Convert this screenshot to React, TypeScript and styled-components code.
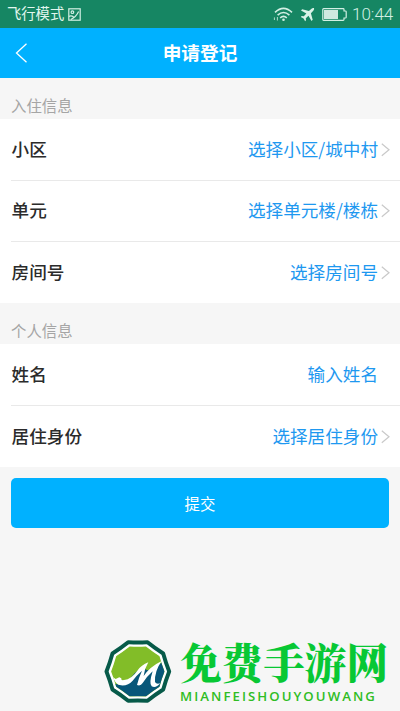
import React from "react";
import styled, { createGlobalStyle } from "styled-components";

const GlobalStyle = createGlobalStyle`
  * { box-sizing: border-box; }
  body {
    margin: 0;
    background: #f6f6f6;
    font-family: "Noto Sans CJK SC", sans-serif;
  }
`;

const Screen = styled.div`
  width: 400px;
  height: 711px;
  display: flex;
  flex-direction: column;
  overflow: hidden;
  background: #f6f6f6;
`;

const StatusBar = styled.div`
  height: 28px;
  flex: none;
  display: flex;
  align-items: center;
  justify-content: space-between;
  padding: 0 7px 0 7px;
  background: #168663;
  color: #d3efe4;
`;

const StatusGroup = styled.div`
  display: flex;
  align-items: center;
`;

const Mode = styled.span`
  font-size: 14.3px;
  line-height: 26px;
  height: 28px;
  margin-right: 4px;
  color: #e2f6ee;
`;

const Clock = styled.span`
  font-family: Roboto, sans-serif;
  font-weight: 300;
  font-size: 17px;
  line-height: 28px;
  width: 41px;
  white-space: nowrap;
`;

const NavBar = styled.header`
  height: 50px;
  flex: none;
  display: grid;
  grid-template-columns: 60px 1fr 60px;
  align-items: center;
  background: #00b1ff;
  color: #fff;
`;

const BackButton = styled.button`
  border: 0;
  background: none;
  padding: 0 0 0 15px;
  height: 50px;
  display: flex;
  align-items: center;
`;

const Title = styled.h1`
  margin: 0;
  font-size: 18.7px;
  font-weight: 700;
  line-height: 48px;
  height: 50px;
  text-align: center;
`;

const SectionLabel = styled.h2<{ $height: number }>`
  margin: 0;
  flex: none;
  height: ${(p) => p.$height}px;
  display: flex;
  align-items: flex-end;
  padding: 0 12px 3px 11px;
  font-size: 15.4px;
  font-weight: 400;
  line-height: 22px;
  color: #a5a5a5;
`;

const Group = styled.section`
  flex: none;
  background: #fff;
`;

const Row = styled.div<{ $height: number }>`
  height: ${(p) => p.$height}px;
  display: flex;
  align-items: center;
  margin-left: 11px;
  padding-right: 10px;
  font-size: 17.6px;
  line-height: 26px;

  & + & {
    border-top: 1px solid #e9e9e9;
  }
`;

const Label = styled.span`
  flex: 1;
  padding: 0 0 2px 0.6px;
  font-weight: 500;
  color: #2b2b2b;
`;

const Value = styled.span`
  padding-bottom: 2px;
  color: #1e98f0;
`;

const Trailing = styled.span`
  width: 12px;
  display: flex;
  justify-content: flex-end;
`;

const Submit = styled.button`
  flex: none;
  height: 50px;
  margin: 11px 11px 0;
  padding: 0;
  border: 0;
  border-radius: 5px;
  background: #00b1ff;
  color: #fff;
  font: 400 15.4px/48px "Noto Sans CJK SC", sans-serif;
`;

const Brand = styled.footer`
  margin-top: auto;
  flex: none;
  height: 75px;
  display: flex;
  padding-left: 103px;
`;

const BrandText = styled.div`
  margin-left: 7px;
  display: flex;
  flex-direction: column;
`;

const BrandName = styled.span`
  height: 52px;
  font-family: "Noto Serif CJK SC", "Noto Sans CJK SC", serif;
  font-size: 41.6px;
  font-weight: 900;
  line-height: 50px;
  white-space: nowrap;
  color: #08c834;
`;

const BrandLatin = styled.span`
  font-family: "Open Sans", sans-serif;
  font-size: 13.2px;
  font-weight: 600;
  line-height: 16px;
  letter-spacing: 2.05px;
  color: #2fbd24;
`;

const Chevron = () => (
  <svg width="9" height="14" viewBox="0 0 9 14" fill="none" stroke="#c9c9c9" strokeWidth="1.2">
    <path d="M0.8 0.8 L8 6.8 L0.8 12.8" />
  </svg>
);

const PictureIcon = () => (
  <svg width="13" height="13" viewBox="0 0 13 13" fill="none" stroke="#d3efe4" strokeWidth="1.2">
    <rect x="0.8" y="0.8" width="11.4" height="11.4" />
    <circle cx="4.4" cy="4.2" r="1.3" />
    <path d="M1 8.4 Q3.2 7 5.6 9 M2.8 11.6 Q8.2 9 10.6 3.6" />
  </svg>
);

const WifiIcon = () => (
  <svg width="20" height="15" viewBox="0 0 20 15" fill="none" stroke="#d3efe4" strokeWidth="1.6">
    <path d="M2 5.4 Q10.5 -2.6 19 5.4 M4.6 8.2 Q10.5 2.8 16.4 8.2 M7.2 10.8 Q10.5 8 13.8 10.8" />
    <circle cx="10.5" cy="12.8" r="1.3" fill="#d3efe4" stroke="none" />
    <path d="M1.4 10.4 V13 M4.4 10 V13.5" strokeWidth="1" opacity="0.8" />
  </svg>
);

const PlaneIcon = () => (
  <svg width="15" height="15" viewBox="0 0 15 15" fill="#d9f2e8">
    <path d="M14 1.1 Q12.7 0.5 11.5 1.7 L8.9 4.1 L2.2 2.3 L1 3.5 L6.4 6.6 L3.8 9.3 L1.7 9 L0.8 9.9 L3.6 11.4 L5.1 14.2 L6 13.3 L5.8 11.3 L8.5 8.7 L11.5 14 L12.7 12.8 L10.9 6.2 L13.3 3.7 Q14.6 2.3 14 1.1 Z" />
  </svg>
);

const BatteryIcon = () => (
  <svg width="25" height="13" viewBox="0 0 25 13">
    <path
      d="M1.6 0.7 H21.2 Q22 0.7 22 1.5 V3 H23.4 Q24.2 3 24.2 3.8 V9.2 Q24.2 10 23.4 10 H22 V11.5 Q22 12.3 21.2 12.3 H1.6 Q0.8 12.3 0.8 11.5 V1.5 Q0.8 0.7 1.6 0.7 Z"
      fill="none"
      stroke="#d3efe4"
      strokeWidth="1.2"
    />
    <rect x="2" y="2" width="14" height="9" fill="#cfe9e0" />
  </svg>
);

// Ten-sided badge outline whose sides bow slightly inwards.
const badge = (r: number) => {
  const cx = 104.5;
  const cy = 106.5;
  const at = (deg: number, radius: number) => {
    const a = (deg * Math.PI) / 180;
    return `${(cx + radius * Math.cos(a)).toFixed(2)} ${(cy + radius * 0.98 * Math.sin(a)).toFixed(2)}`;
  };
  let d = `M${at(0, r)}`;
  for (let i = 0; i < 10; i++) {
    d += ` Q${at(i * 36 + 18, r * 0.935)} ${at((i + 1) * 36, r)}`;
  }
  return d + " Z";
};

const BrandMark = () => (
  <svg width="70" height="70" viewBox="0 0 210 210" strokeLinejoin="round">
    <clipPath id="badge-core">
      <path d={badge(80)} />
    </clipPath>
    <path d={badge(94)} fill="#075a49" stroke="#075a49" strokeWidth="12" />
    <path d={badge(84)} fill="#fff" stroke="#fff" strokeWidth="7" />
    <path d={badge(78)} fill="#82bd28" stroke="#82bd28" strokeWidth="4" />
    <g clipPath="url(#badge-core)">
      <path
        d="M210 66 L175 80 L140 105 L115 95 L95 112 L75 134 L50 146 L20 140 V210 H210 Z"
        fill="#085779"
      />
      <path
        d="M28 122 L38 129 L49 124 L55 127 Q52 134 63 132 Q86 129 103 104 Q115 87 136 79 Q125 97 122 120 Q141 92 176 75 Q154 106 156 138 Q160 146 172 142 Q158 158 146 151 Q137 143 149 106 Q131 122 119 141 Q113 151 102 147 Q106 128 117 104 Q101 118 89 134 Q75 150 54 148 Q38 146 28 122 Z"
        fill="#fff"
      />
    </g>
  </svg>
);

interface Field {
  label: string;
  value: string;
  height: number;
  picks?: boolean;
}

const residence: Field[] = [
  { label: "小区", value: "选择小区/城中村", height: 61, picks: true },
  { label: "单元", value: "选择单元楼/楼栋", height: 61, picks: true },
  { label: "房间号", value: "选择房间号", height: 62, picks: true },
];

const personal: Field[] = [
  { label: "姓名", value: "输入姓名", height: 61 },
  { label: "居住身份", value: "选择居住身份", height: 62, picks: true },
];

const FieldGroup = ({ fields }: { fields: Field[] }) => (
  <Group>
    {fields.map((f) => (
      <Row key={f.label} $height={f.height}>
        <Label>{f.label}</Label>
        <Value>{f.value}</Value>
        <Trailing>{f.picks && <Chevron />}</Trailing>
      </Row>
    ))}
  </Group>
);

const StatusIcons = styled(StatusGroup)`
  & > svg:nth-child(1) { margin-right: 7px; }
  & > svg:nth-child(2) { margin-right: 7px; }
  & > svg:nth-child(3) { margin-right: 5px; }
`;

export default function App() {
  return (
    <>
      <GlobalStyle />
      <Screen>
        <StatusBar>
          <StatusGroup>
            <Mode>飞行模式</Mode>
            <PictureIcon />
          </StatusGroup>
          <StatusIcons>
            <WifiIcon />
            <PlaneIcon />
            <BatteryIcon />
            <Clock>10:44</Clock>
          </StatusIcons>
        </StatusBar>
        <NavBar>
          <BackButton aria-label="返回">
            <svg width="13" height="20" viewBox="0 0 13 20" fill="none" stroke="#fff" strokeWidth="1.3">
              <path d="M11.5 0.8 L1.5 10 L11.5 19.2" />
            </svg>
          </BackButton>
          <Title>申请登记</Title>
        </NavBar>
        <SectionLabel $height={41}>入住信息</SectionLabel>
        <FieldGroup fields={residence} />
        <SectionLabel $height={41}>个人信息</SectionLabel>
        <FieldGroup fields={personal} />
        <Submit>提交</Submit>
        <Brand>
          <BrandMark />
          <BrandText>
            <BrandName>免费手游网</BrandName>
            <BrandLatin>MIANFEISHOUYOUWANG</BrandLatin>
          </BrandText>
        </Brand>
      </Screen>
    </>
  );
}
